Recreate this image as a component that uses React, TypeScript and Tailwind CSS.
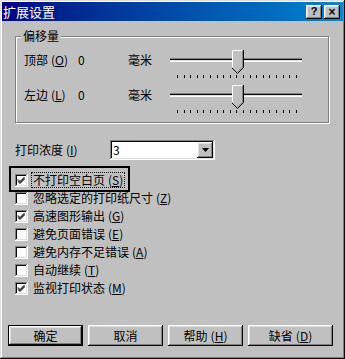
import React from 'react';

const RAISED = 'shadow-[inset_-1px_-1px_#0a0a0a,inset_1px_1px_#fff,inset_-2px_-2px_#808080,inset_2px_2px_#dfdfdf]';
const SUNKEN = 'shadow-[inset_-1px_-1px_#fff,inset_1px_1px_#808080,inset_-2px_-2px_#dfdfdf,inset_2px_2px_#0a0a0a]';

const OPTIONS = [
  { label: '不打印空白页', key: 'S', checked: true, focused: true },
  { label: '忽略选定的打印纸尺寸', key: 'Z', checked: false },
  { label: '高速图形输出', key: 'G', checked: true },
  { label: '避免页面错误', key: 'E', checked: false },
  { label: '避免内存不足错误', key: 'A', checked: false },
  { label: '自动继续', key: 'T', checked: false },
  { label: '监视打印状态', key: 'M', checked: true },
];

function Key({ k }: { k: string }) {
  return (
    <span className="ml-[3px]">
      (<u>{k}</u>)
    </span>
  );
}

function Slider() {
  const ticks = Array.from({ length: 19 }, (_, i) => 12 + i * 6.6);
  return (
    <svg width="140" height="35" className="block">
      {/* groove */}
      <rect x="5" y="9" width="132" height="1" fill="#808080" />
      <rect x="5" y="10" width="132" height="1" fill="#0a0a0a" />
      <rect x="5" y="11" width="132" height="1" fill="#dfdfdf" />
      <rect x="5" y="12" width="132" height="1" fill="#fff" />
      {/* thumb */}
      <polygon points="67,1 78,1 78,18 72.5,24 67,18" fill="#c0c0c0" />
      <polyline points="67.5,18 67.5,1.5 77,1.5" fill="none" stroke="#fff" />
      <polyline points="78.5,1 78.5,18.5 72.5,24.5 67,19" fill="none" stroke="#0a0a0a" />
      <polyline points="77.5,2 77.5,18 72.5,23" fill="none" stroke="#808080" />
      {ticks.map((x) => (
        <rect key={x} x={Math.round(x)} y="26" width="1" height="3" fill="#000" />
      ))}
    </svg>
  );
}

function Checkbox({ checked }: { checked: boolean }) {
  return (
    <span className={`w-[13px] h-[13px] bg-white shrink-0 relative ${SUNKEN}`}>
      {checked && (
        <svg width="13" height="13" className="absolute inset-0">
          <path d="M3 5.5 L5 7.5 L9.5 3 M3 6.5 L5 8.5 L9.5 4 M3 7.5 L5 9.5 L9.5 5" stroke="#000" strokeWidth="1" fill="none" />
        </svg>
      )}
    </span>
  );
}

export default function App() {
  return (
    <div
      className="w-[345px] h-[359px] bg-[#c0c0c0] text-black text-[12px] leading-[14px] flex flex-col p-[2px] shadow-[inset_-1px_-1px_#0a0a0a,inset_1px_1px_#dfdfdf,inset_-2px_-2px_#808080,inset_2px_2px_#fff]"
      style={{ fontFamily: '"Noto Sans CJK SC", "Liberation Sans", sans-serif' }}
    >
      {/* title bar */}
      <div className="h-[19px] bg-gradient-to-r from-[#000080] to-[#1084d0] flex items-center justify-between pl-[1px] pr-[3px]">
        <span className="text-white text-[13px] leading-[16px]">扩展设置</span>
        <div className="flex gap-[2px]">
          <span className={`w-[16px] h-[14px] bg-[#c0c0c0] flex items-center justify-center text-[11px] font-bold leading-none ${RAISED}`} style={{ fontFamily: '"Liberation Sans", sans-serif' }}>?</span>
          <span className={`w-[16px] h-[14px] bg-[#c0c0c0] flex items-center justify-center text-[12px] font-bold leading-none ${RAISED}`} style={{ fontFamily: '"Liberation Sans", sans-serif' }}>×</span>
        </div>
      </div>

      <div className="pl-[13px] pr-[14px]">
        {/* offset group */}
        <div className="relative mt-[15px] border border-[#808080] shadow-[inset_1px_1px_#fff,1px_1px_#fff] pt-[12px] pb-[3px]">
          <span className="absolute -top-[8px] left-[5px] px-[2px] bg-[#c0c0c0]">偏移量</span>
          {[
            { label: '顶部', k: 'O' },
            { label: '左边', k: 'L' },
          ].map((r) => (
            <div key={r.k} className="flex h-[35px]">
              <span className="w-[62px] pl-[8px] leading-[22px] whitespace-nowrap">
                {r.label}
                <Key k={r.k} />
              </span>
              <span className="w-[50px] leading-[22px]">0</span>
              <span className="w-[37px] leading-[22px]">毫米</span>
              <Slider />
            </div>
          ))}
        </div>

        {/* density */}
        <div className="flex items-center mt-[17px] h-[20px]">
          <span className="w-[95px]">
            打印浓度
            <Key k="I" />
          </span>
          <div className={`w-[105px] h-[20px] bg-white flex items-center justify-between pl-[3px] pr-[2px] ${SUNKEN}`}>
            <span>3</span>
            <span className={`w-[16px] h-[16px] bg-[#c0c0c0] flex items-center justify-center ${RAISED}`}>
              <svg width="7" height="4">
                <polygon points="0,0 7,0 3.5,4" fill="#000" />
              </svg>
            </span>
          </div>
        </div>
      </div>

      {/* options */}
      <div className="mt-[11px] pl-[13px] flex flex-col">
        {OPTIONS.map((o) => (
          <div key={o.key} className="relative flex items-center h-[18px]">
            {o.focused && (
              <span className="absolute -left-[6px] -top-[5px] w-[121px] h-[26px] border-[2px] border-black" />
            )}
            <Checkbox checked={o.checked} />
            <span className={`ml-[4px] px-[1px] whitespace-nowrap ${o.focused ? 'outline outline-1 outline-dotted outline-black' : ''}`}>
              {o.label}
              <Key k={o.key} />
            </span>
          </div>
        ))}
      </div>

      {/* buttons */}
      <div className="mt-[28px] pl-[6px] flex gap-[5px]">
        <div className="border border-black">
          <button className={`w-[73px] h-[19px] bg-[#c0c0c0] flex items-center justify-center ${RAISED}`}>确定</button>
        </div>
        <button className={`w-[75px] h-[21px] bg-[#c0c0c0] flex items-center justify-center ${RAISED}`}>取消</button>
        <button className={`w-[75px] h-[21px] bg-[#c0c0c0] flex items-center justify-center ${RAISED}`}>
          帮助
          <Key k="H" />
        </button>
        <button className={`w-[85px] h-[21px] bg-[#c0c0c0] flex items-center justify-center ${RAISED}`}>
          缺省
          <Key k="D" />
        </button>
      </div>
    </div>
  );
}
